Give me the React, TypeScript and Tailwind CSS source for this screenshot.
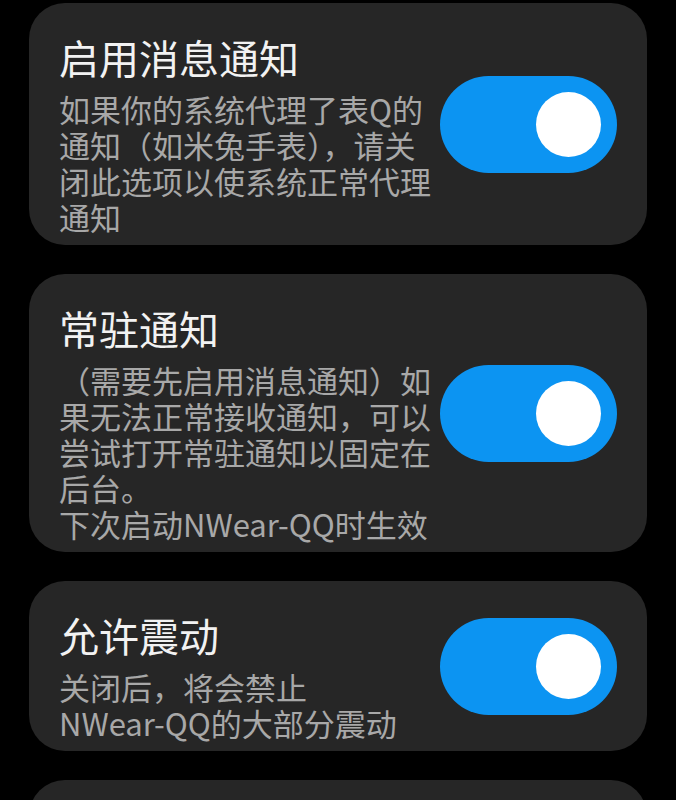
import { useState } from 'react';

type Item = {
  id: string;
  title: string;
  desc: string;
};

const ITEMS: Item[] = [
  {
    id: 'notify',
    title: '启用消息通知',
    desc: '如果你的系统代理了表Q的通知（如米兔手表），请关闭此选项以使系统正常代理通知',
  },
  {
    id: 'resident',
    title: '常驻通知',
    desc: '（需要先启用消息通知）如果无法正常接收通知，可以尝试打开常驻通知以固定在后台。\n下次启动NWear-QQ时生效',
  },
  {
    id: 'vibrate',
    title: '允许震动',
    desc: '关闭后，将会禁止\nNWear-QQ的大部分震动',
  },
];

const FONT = { fontFamily: '"Noto Sans CJK SC", "Noto Sans", sans-serif' };

function Toggle({ on, onChange }: { on: boolean; onChange: () => void }) {
  return (
    <button
      type="button"
      onClick={onChange}
      className={`shrink-0 flex items-center w-[177px] h-[97px] rounded-full px-[16px] ${
        on ? 'bg-[#0c94f2] justify-end' : 'bg-[#555555] justify-start'
      }`}
    >
      <span className="block w-[65px] h-[65px] rounded-full bg-white" />
    </button>
  );
}

function SettingCard({ item, on, onToggle }: { item: Item; on: boolean; onToggle: () => void }) {
  return (
    <div className="flex items-center rounded-[36px] bg-[#262626] px-[30px]">
      <div className="w-[380px] shrink-0 pt-[26px] pb-[10px]">
        <p className="text-[40px] leading-[56px] text-[#f2f2f2]">{item.title}</p>
        <p className="mt-[6px] text-[31px] leading-[36px] text-[#a8a8a8] whitespace-pre-line">{item.desc}</p>
      </div>
      <div className="flex-1" />
      <Toggle on={on} onChange={onToggle} />
    </div>
  );
}

export default function App() {
  const [state, setState] = useState<Record<string, boolean>>({
    notify: true,
    resident: true,
    vibrate: true,
  });

  return (
    <div className="min-h-screen bg-black overflow-hidden" style={FONT}>
      <div className="flex flex-col gap-[29px] px-[29px] pt-[3px]">
        {ITEMS.map((it) => (
          <SettingCard
            key={it.id}
            item={it}
            on={state[it.id]}
            onToggle={() => setState((s) => ({ ...s, [it.id]: !s[it.id] }))}
          />
        ))}
        {/* 下一项，画面外 */}
        <div className="h-[170px] rounded-[36px] bg-[#262626]" />
      </div>
    </div>
  );
}
